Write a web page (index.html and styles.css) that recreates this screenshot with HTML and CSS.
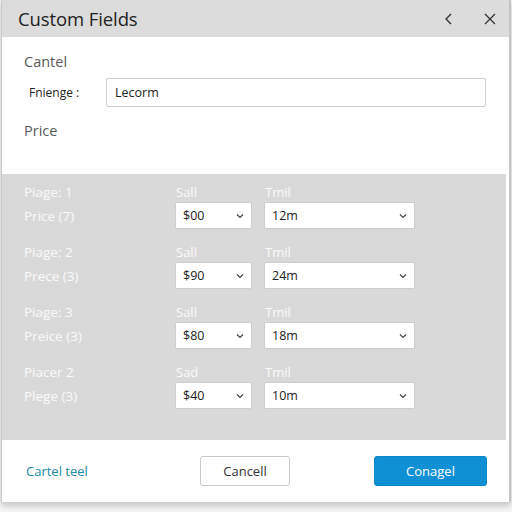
FILE: index.html
```html
<!DOCTYPE html>
<html>
<head>
<meta charset="utf-8">
<link rel="stylesheet" href="styles.css">
</head>
<body>
<div class="dialog">
  <div class="header">
    <div class="title">Custom Fields</div>
    <div class="actions">
      <svg class="icon" width="14" height="14" viewBox="0 0 14 14"><path d="M9 2 L4 7 L9 12" fill="none" stroke="#333" stroke-width="1.4"/></svg>
      <svg class="icon" width="14" height="14" viewBox="0 0 14 14"><path d="M2 2 L12 12 M12 2 L2 12" fill="none" stroke="#333" stroke-width="1.3"/></svg>
    </div>
  </div>
  <div class="body">
    <div class="section-label">Cantel</div>
    <div class="field">
      <div class="field-label">Fnienge :</div>
      <div class="input">Lecorm</div>
    </div>
    <div class="section-label price">Price</div>
  </div>
  <div class="grid-section">
    <div class="row">
      <div class="lbl">Piage: 1</div><div class="col-h">Sall</div><div class="col-h">Tmil</div>
      <div class="lbl">Price (7)</div>
      <div class="select small"><span>$00</span><svg width="10" height="6" viewBox="0 0 10 6"><path d="M2 1.5 L5 4.5 L8 1.5" fill="none" stroke="#444" stroke-width="1.2"/></svg></div>
      <div class="select wide"><span>12m</span><svg width="10" height="6" viewBox="0 0 10 6"><path d="M2 1.5 L5 4.5 L8 1.5" fill="none" stroke="#444" stroke-width="1.2"/></svg></div>
    </div>
    <div class="row">
      <div class="lbl">Piage: 2</div><div class="col-h">Sall</div><div class="col-h">Tmil</div>
      <div class="lbl">Prece (3)</div>
      <div class="select small"><span>$90</span><svg width="10" height="6" viewBox="0 0 10 6"><path d="M2 1.5 L5 4.5 L8 1.5" fill="none" stroke="#444" stroke-width="1.2"/></svg></div>
      <div class="select wide"><span>24m</span><svg width="10" height="6" viewBox="0 0 10 6"><path d="M2 1.5 L5 4.5 L8 1.5" fill="none" stroke="#444" stroke-width="1.2"/></svg></div>
    </div>
    <div class="row">
      <div class="lbl">Piage: 3</div><div class="col-h">Sall</div><div class="col-h">Tmil</div>
      <div class="lbl">Preice (3)</div>
      <div class="select small"><span>$80</span><svg width="10" height="6" viewBox="0 0 10 6"><path d="M2 1.5 L5 4.5 L8 1.5" fill="none" stroke="#444" stroke-width="1.2"/></svg></div>
      <div class="select wide"><span>18m</span><svg width="10" height="6" viewBox="0 0 10 6"><path d="M2 1.5 L5 4.5 L8 1.5" fill="none" stroke="#444" stroke-width="1.2"/></svg></div>
    </div>
    <div class="row">
      <div class="lbl">Piacer 2</div><div class="col-h">Sad</div><div class="col-h">Tmil</div>
      <div class="lbl">Plege (3)</div>
      <div class="select small"><span>$40</span><svg width="10" height="6" viewBox="0 0 10 6"><path d="M2 1.5 L5 4.5 L8 1.5" fill="none" stroke="#444" stroke-width="1.2"/></svg></div>
      <div class="select wide"><span>10m</span><svg width="10" height="6" viewBox="0 0 10 6"><path d="M2 1.5 L5 4.5 L8 1.5" fill="none" stroke="#444" stroke-width="1.2"/></svg></div>
    </div>
  </div>
  <div class="footer">
    <a class="link">Cartel teel</a>
    <button class="btn btn-secondary">Cancell</button>
    <button class="btn btn-primary">Conagel</button>
  </div>
</div>
</body>
</html>
```
FILE: styles.css
```css
* { box-sizing: border-box; }
html, body { margin: 0; padding: 0; }
body {
  width: 512px;
  height: 512px;
  background: #f4f4f4;
  font-family: "Open Sans", "Noto Sans", sans-serif;
  overflow: hidden;
}
.dialog {
  margin-left: 1px;
  width: 510px;
  height: 502px;
  background: #fff;
  border-left: 1px solid #c9c9c9;
  border-right: 2px solid #c4c4c4;
  box-shadow: 0 4px 6px rgba(0,0,0,0.18);
  display: flex;
  flex-direction: column;
}
.header {
  height: 37px;
  background: #dcdcdc;
  display: flex;
  align-items: center;
  justify-content: space-between;
  padding: 0 12px 0 16px;
}
.title {
  font-size: 18.5px;
  color: #222;
  letter-spacing: -0.1px;
}
.actions {
  display: flex;
  gap: 27px;
  align-items: center;
}
.icon { display: block; }
.body {
  padding: 0 22px 0 22px;
  height: 137px;
  display: flex;
  flex-direction: column;
}
.section-label {
  font-size: 14.5px;
  color: #5a5a5a;
  margin-top: 15px;
  line-height: 20px;
}
.price { margin-top: 14px; }
.field {
  display: flex;
  align-items: center;
  margin-top: 6px;
}
.field-label {
  width: 82px;
  padding-left: 5px;
  font-size: 12px;
  color: #222;
}
.input {
  width: 380px;
  height: 29px;
  border: 1px solid #cfcfcf;
  border-radius: 2px;
  padding-left: 8px;
  font-size: 12.5px;
  color: #222;
  display: flex;
  align-items: center;
}
.grid-section {
  background: #d9d9d9;
  margin-right: 3px;
  height: 266px;
  padding: 10px 0 0 22px;
  display: flex;
  flex-direction: column;
  gap: 15px;
}
.row {
  display: grid;
  grid-template-columns: 139px 77px 151px;
  grid-template-rows: 16px 27px;
  column-gap: 12px;
  row-gap: 2px;
  align-items: center;
}
.lbl {
  font-size: 13.5px;
  color: #f9f9f9;
  line-height: 16px;
}
.col-h {
  font-size: 13px;
  color: #f9f9f9;
  line-height: 16px;
  padding-left: 1px;
}
.select {
  height: 27px;
  background: #fff;
  border: 1px solid #cdcdcd;
  border-radius: 2px;
  display: flex;
  align-items: center;
  justify-content: space-between;
  padding: 0 6px 0 7px;
  font-size: 12.5px;
  color: #222;
}
.select svg { display: block; }
.footer {
  flex: 1;
  display: flex;
  align-items: center;
  padding: 0 22px 0 24px;
}
.link {
  font-size: 13px;
  color: #1b8aa6;
  width: 174px;
}
.btn {
  height: 30px;
  font-family: "Open Sans", "Noto Sans", sans-serif;
  font-size: 13px;
  border-radius: 3px;
  cursor: pointer;
}
.btn-secondary {
  width: 90px;
  background: #fff;
  border: 1px solid #c9c9c9;
  color: #333;
}
.btn-primary {
  margin-left: auto;
  width: 113px;
  background: #0f90d4;
  border: 1px solid #0d86c6;
  color: #fff;
}
```
